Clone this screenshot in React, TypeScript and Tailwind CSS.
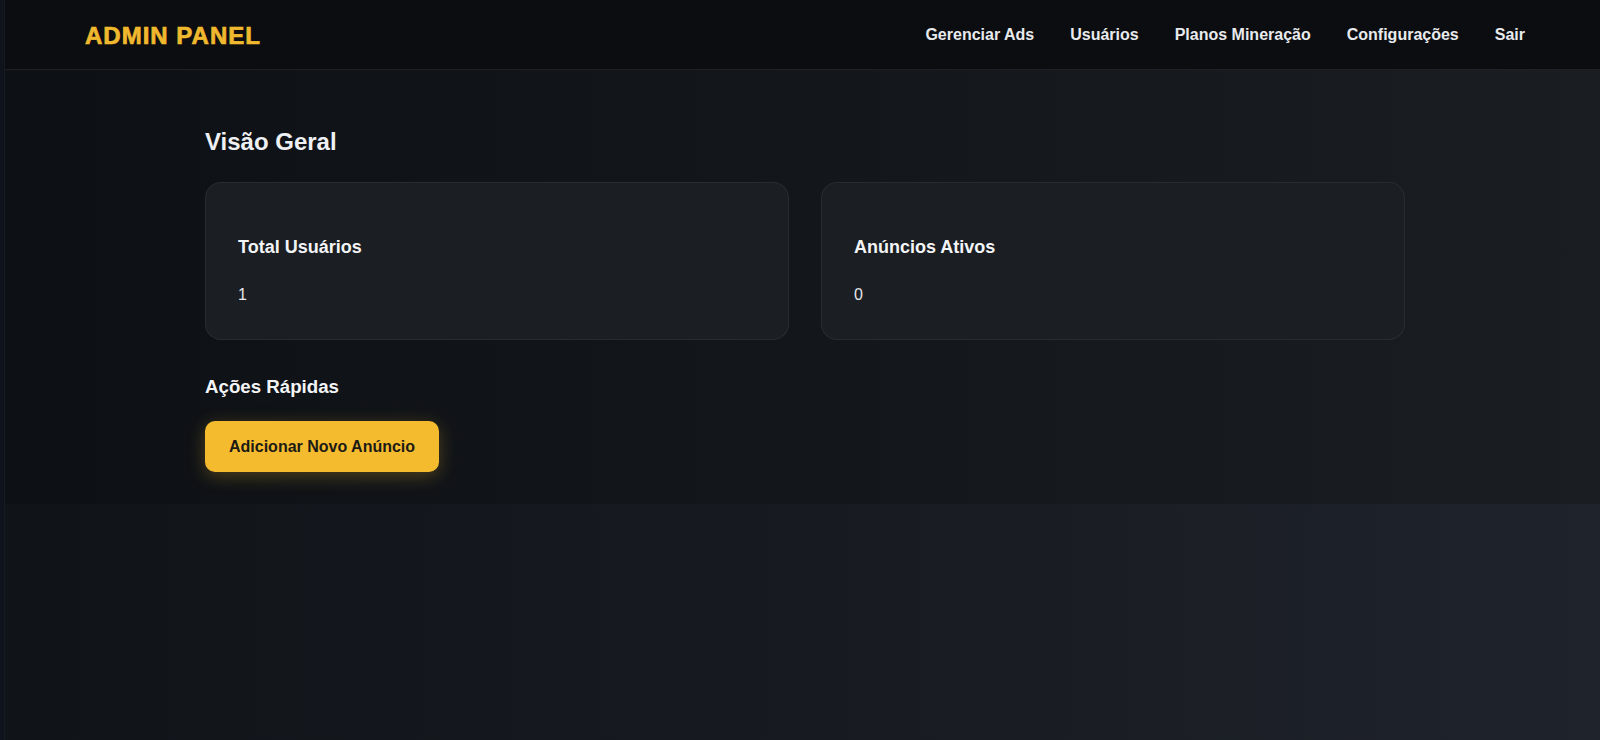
export default function App() {
  const stats = [
    { label: 'Total Usuários', value: 1 },
    { label: 'Anúncios Ativos', value: 0 },
  ]
  const links = ['Gerenciar Ads', 'Usuários', 'Planos Mineração', 'Configurações', 'Sair']

  return (
    <div className="h-[740px] flex overflow-hidden bg-[#0e1116] font-['Liberation_Sans',Arial,sans-serif]">
      {/* thin strip on the far left */}
      <div className="w-[5px] shrink-0 bg-[#0f131b] border-r border-[#161a22]" />

      <div className="flex-1 flex flex-col bg-gradient-to-r from-[#0f1217] via-[#15181d] to-[#1e222a]">
        <header className="h-[70px] shrink-0 flex items-center justify-between pl-[80px] pr-[75px] bg-[#0b0d10] border-b border-[#1d2025]">
          <h1 className="text-[24px] leading-none font-bold tracking-[1px] text-[#f0b82e] [-webkit-text-stroke:0.7px_#f0b82e] pt-[2px]">ADMIN PANEL</h1>
          <nav className="flex items-center gap-[36px]">
            {links.map(l => (
              <a key={l} href="#" className="text-[16px] font-bold text-[#e8eaed]">{l}</a>
            ))}
          </nav>
        </header>

        <main className="pt-[56px] pb-8 bg-gradient-to-r from-[#0d1014] via-[#13161b] to-[#1a1d22]">
          <div className="w-[1200px] ml-[200px]">
            <h2 className="text-2xl font-bold text-[#eef0f3] mb-[24px]">Visão Geral</h2>

            <div className="grid grid-cols-2 gap-8">
              {stats.map(s => (
                <div key={s.label} className="rounded-2xl border border-white/[0.06] bg-[#1b1e23] pt-[50px] pl-8 pr-8 pb-8">
                  <h3 className="text-lg font-bold text-[#f3f4f6] mb-[22px]">{s.label}</h3>
                  <p className="text-base text-[#e5e7eb]">{s.value}</p>
                </div>
              ))}
            </div>

            <h3 className="mt-[33px] text-[18.7px] leading-[28px] font-bold text-[#f3f4f6]">Ações Rápidas</h3>
            <button className="mt-5 h-[51px] px-6 rounded-[10px] bg-[#f4bb2f] text-base font-bold text-[#1c1a14] shadow-[0_4px_18px_rgba(244,187,47,0.28)]">
              Adicionar Novo Anúncio
            </button>
          </div>
        </main>

        <div className="flex-1 bg-gradient-to-r from-[#101318] via-[#171a20] to-[#1f232b]" />
      </div>
    </div>
  )
}
